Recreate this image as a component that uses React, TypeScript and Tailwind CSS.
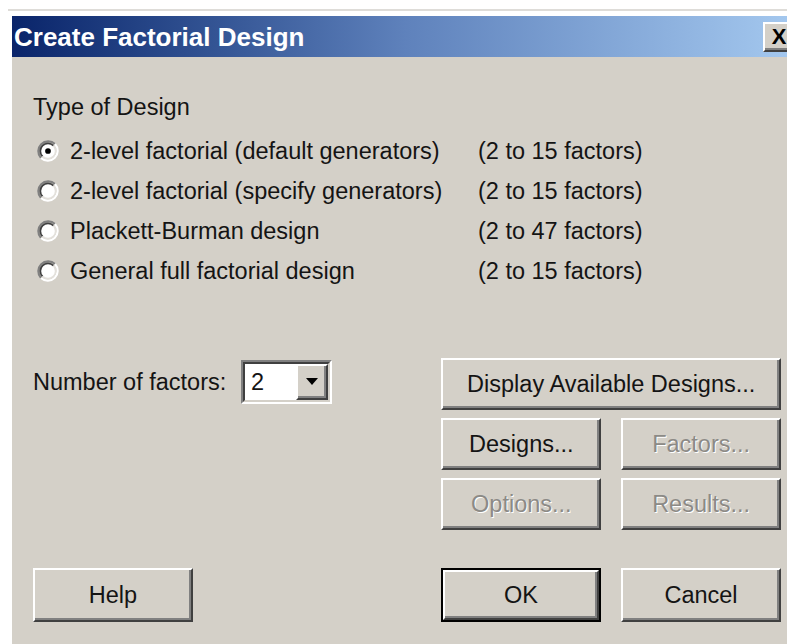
import React from "react";
import clsx from "clsx";

type ButtonProps = {
  label: string;
  disabled?: boolean;
  isDefault?: boolean;
  className?: string;
};

// Classic raised push button; the default one gets a black frame around it.
function PushButton({ label, disabled, isDefault, className }: ButtonProps) {
  return (
    <div className={clsx(isDefault && "border-2 border-black", className)}>
      <div className="flex h-full items-center justify-center border-2 border-t-white border-l-white border-r-[#404040] border-b-[#404040] bg-[#d4d0c8] shadow-[inset_-2px_-2px_0_#808080]">
        <span
          className={clsx(
            disabled
              ? "text-[#8c8a86] [text-shadow:1px_1px_0_#ffffff]"
              : "text-[#141414]"
          )}
        >
          {label}
        </span>
      </div>
    </div>
  );
}

function Radio({ checked }: { checked?: boolean }) {
  return (
    <svg width="22" height="22" viewBox="0 0 20 20" className="shrink-0">
      <circle cx="10" cy="10" r="7" fill="#ffffff" />
      <path d="M3.64 16.36 A9 9 0 0 1 16.36 3.64" fill="none" stroke="#808080" strokeWidth="2" />
      <path d="M16.36 3.64 A9 9 0 0 1 3.64 16.36" fill="none" stroke="#ffffff" strokeWidth="2" />
      <path d="M5.05 14.95 A7 7 0 0 1 14.95 5.05" fill="none" stroke="#404040" strokeWidth="1.6" />
      <path d="M14.95 5.05 A7 7 0 0 1 5.05 14.95" fill="none" stroke="#e4e1dc" strokeWidth="1.6" />
      {checked && <circle cx="10" cy="10" r="2.6" fill="#000000" />}
    </svg>
  );
}

const designs = [
  { label: "2-level factorial (default generators)", range: "(2 to 15 factors)", checked: true },
  { label: "2-level factorial (specify generators)", range: "(2 to 15 factors)" },
  { label: "Plackett-Burman design", range: "(2 to 47 factors)" },
  { label: "General full factorial design", range: "(2 to 15 factors)" },
];

function FactorCombo() {
  return (
    <div className="flex h-[44px] w-[91px] border-2 border-t-[#808080] border-l-[#808080] border-r-white border-b-white">
      <div className="flex flex-1 items-stretch border-2 border-t-[#404040] border-l-[#404040] border-r-[#d4d0c8] border-b-[#d4d0c8] bg-white">
        <span className="flex flex-1 items-center pl-[6px] text-[#141414]">2</span>
        <div className="flex w-[32px] items-center justify-center border-2 border-t-white border-l-white border-r-[#404040] border-b-[#404040] bg-[#d4d0c8] shadow-[inset_-2px_-2px_0_#808080]">
          <svg width="12" height="8" viewBox="0 0 12 8">
            <path d="M0 0 H12 L6 7 Z" fill="#000000" />
          </svg>
        </div>
      </div>
    </div>
  );
}

export default function App() {
  return (
    <div className="relative h-[644px] w-[787px] overflow-hidden bg-white font-['Liberation_Sans',Arial,sans-serif] text-[23.5px] leading-[24px]">
      <div className="ml-[8px] mt-[9px] h-[2px] bg-[#dedcd8]" />
      <div className="ml-[12px] mt-[5px] w-[790px] bg-[#d4d0c8]">
        {/* title bar */}
        <div className="flex h-[41px] items-center justify-between bg-linear-to-r from-[#0a246a] via-[#5f82bc] to-[#a6caf0] pl-[2px] pr-[7px]">
          <span className="text-[26px] font-bold text-white">Create Factorial Design</span>
          <div className="flex h-[30px] w-[32px] items-center justify-center border-2 border-t-white border-l-white border-r-[#404040] border-b-[#404040] bg-[#d4d0c8] shadow-[inset_-2px_-2px_0_#808080]">
            <span className="text-[22px] font-bold text-black">X</span>
          </div>
        </div>

        <div className="h-[587px] px-[21px] pt-[38px] text-[#141414]">
          <div>Type of Design</div>

          <div className="mt-[12px]">
            {designs.map((d) => (
              <div key={d.label} className="flex h-[40px] items-center">
                <div className="flex w-[445px] items-center">
                  <div className="ml-[4px]">
                    <Radio checked={d.checked} />
                  </div>
                  <span className="ml-[11px]">{d.label}</span>
                </div>
                <span>{d.range}</span>
              </div>
            ))}
          </div>

          <div className="mt-[67px] flex">
            <div className="flex h-[48px] w-[409px] items-center">
              <span className="w-[208px]">Number of factors:</span>
              <FactorCombo />
            </div>
            <div className="flex w-[340px] flex-col gap-[8px]">
              <PushButton label="Display Available Designs..." className="h-[52px]" />
              <div className="grid grid-cols-2 gap-x-[20px] gap-y-[8px]">
                <PushButton label="Designs..." className="h-[52px]" />
                <PushButton label="Factors..." disabled className="h-[52px]" />
                <PushButton label="Options..." disabled className="h-[52px]" />
                <PushButton label="Results..." disabled className="h-[52px]" />
              </div>
            </div>
          </div>

          <div className="mt-[38px] flex">
            <div className="w-[409px]">
              <PushButton label="Help" className="h-[54px] w-[160px]" />
            </div>
            <div className="flex w-[340px] gap-[20px]">
              <PushButton label="OK" isDefault className="h-[54px] w-[160px]" />
              <PushButton label="Cancel" className="h-[54px] w-[160px]" />
            </div>
          </div>
        </div>
      </div>
    </div>
  );
}
